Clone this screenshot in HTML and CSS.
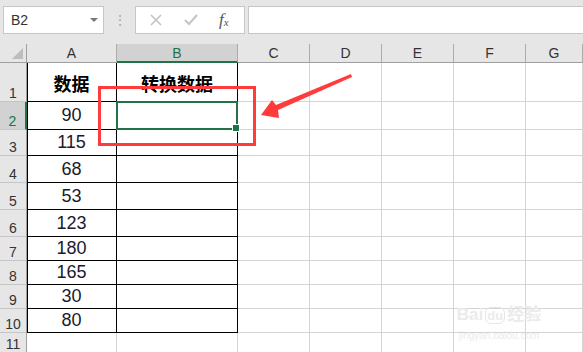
FILE: index.html
```html
<!DOCTYPE html>
<html lang="zh-CN">
<head>
    <meta charset="UTF-8">
    <title>转换数据</title>
    <link rel="stylesheet" href="styles.css">
</head>
<body>
    <div class="toolbar">
        <div class="namebox">
            <span>B2</span>
            <span class="caret"></span>
        </div>
        <div class="dots">⋮</div>
        <div class="fbuttons">
            <svg width="14" height="14" viewBox="0 0 14 14"><path d="M2 2 L12 12 M12 2 L2 12" stroke="#c4c4c4" stroke-width="1.6" fill="none"/></svg>
            <svg width="16" height="14" viewBox="0 0 16 14"><path d="M2 7 L6 11 L14 2" stroke="#c4c4c4" stroke-width="2" fill="none"/></svg>
            <span class="fx"><i>f</i><sub>x</sub></span>
        </div>
        <div class="finput"></div>
    </div>

    <div class="sheet">
        <div class="corner"><span class="tri"></span></div>
        <div class="ch">A</div>
        <div class="ch sel">B</div>
        <div class="ch">C</div>
        <div class="ch">D</div>
        <div class="ch">E</div>
        <div class="ch">F</div>
        <div class="ch">G</div>

        <div class="rh">1</div>
        <div class="c t a head">数据</div>
        <div class="c t b head">转换数据</div>
        <div class="c"></div><div class="c"></div><div class="c"></div><div class="c"></div><div class="c"></div>

        <div class="rh sel">2</div>
        <div class="c t a">90</div>
        <div class="c t b"></div>
        <div class="c"></div><div class="c"></div><div class="c"></div><div class="c"></div><div class="c"></div>

        <div class="rh">3</div>
        <div class="c t a">115</div>
        <div class="c t b"></div>
        <div class="c"></div><div class="c"></div><div class="c"></div><div class="c"></div><div class="c"></div>

        <div class="rh">4</div>
        <div class="c t a">68</div>
        <div class="c t b"></div>
        <div class="c"></div><div class="c"></div><div class="c"></div><div class="c"></div><div class="c"></div>

        <div class="rh">5</div>
        <div class="c t a">53</div>
        <div class="c t b"></div>
        <div class="c"></div><div class="c"></div><div class="c"></div><div class="c"></div><div class="c"></div>

        <div class="rh">6</div>
        <div class="c t a">123</div>
        <div class="c t b"></div>
        <div class="c"></div><div class="c"></div><div class="c"></div><div class="c"></div><div class="c"></div>

        <div class="rh">7</div>
        <div class="c t a">180</div>
        <div class="c t b"></div>
        <div class="c"></div><div class="c"></div><div class="c"></div><div class="c"></div><div class="c"></div>

        <div class="rh">8</div>
        <div class="c t a">165</div>
        <div class="c t b"></div>
        <div class="c"></div><div class="c"></div><div class="c"></div><div class="c"></div><div class="c"></div>

        <div class="rh">9</div>
        <div class="c t a">30</div>
        <div class="c t b"></div>
        <div class="c"></div><div class="c"></div><div class="c"></div><div class="c"></div><div class="c"></div>

        <div class="rh">10</div>
        <div class="c t a">80</div>
        <div class="c t b"></div>
        <div class="c"></div><div class="c"></div><div class="c"></div><div class="c"></div><div class="c"></div>

        <div class="rh">11</div>
        <div class="c"></div><div class="c"></div><div class="c"></div><div class="c"></div><div class="c"></div><div class="c"></div><div class="c"></div>

        <!-- overlays: active cell, annotation box and arrow, watermark -->
        <div class="active"><span class="handle"></span></div>
        <div class="redbox"></div>
        <svg class="arrow" width="100" height="50" viewBox="0 0 100 50">
            <polygon points="1,44 12,29 16,34 91,3 92,6 18,39 19,47" fill="#ff3b3b"/>
        </svg>
        <div class="watermark">
            <div class="wm-logo">Bai<span class="paw">du</span>经验</div>
            <div class="wm-url">jingyan.baidu.com</div>
        </div>
    </div>
</body>
</html>
```

FILE: styles.css
```css
body {
    margin: 0;
    font-family: "Liberation Sans", "Noto Sans CJK SC", sans-serif;
    background: #fff;
    overflow: hidden;
}

.toolbar {
    height: 44px;
    background: #e6e6e6;
    display: flex;
    align-items: flex-start;
    padding: 6px 0 0 3px;
    box-sizing: border-box;
}

.namebox {
    width: 101px;
    height: 28px;
    box-sizing: border-box;
    background: #fff;
    border: 1px solid #c6c6c6;
    display: flex;
    align-items: center;
    justify-content: space-between;
    padding: 0 5px 0 7px;
    font-size: 14px;
    color: #333;
}

.caret {
    width: 0;
    height: 0;
    border-left: 4px solid transparent;
    border-right: 4px solid transparent;
    border-top: 4px solid #777;
}

.dots {
    width: 31px;
    text-align: center;
    color: #aaa;
    font-size: 14px;
    line-height: 28px;
}

.fbuttons {
    width: 110px;
    height: 28px;
    box-sizing: border-box;
    background: #fff;
    border: 1px solid #c6c6c6;
    display: flex;
    align-items: center;
    padding: 0 0 0 13px;
    gap: 20px;
}

.fx {
    font-family: "Liberation Serif", serif;
    font-size: 17px;
    color: #555;
}

.fx sub {
    font-size: 11px;
    font-style: italic;
    vertical-align: -1px;
}

.finput {
    flex: 1;
    height: 28px;
    box-sizing: border-box;
    margin-left: 3px;
    background: #fff;
    border: 1px solid #c6c6c6;
    border-right: none;
}

.sheet {
    position: relative;
    display: grid;
    grid-template-columns: 27px 90px 121px 72px 72px 72px 72px 1fr;
    grid-template-rows: 19px 39px 28px 26px 27px 27px 27px 24px 24px 24px 24px 20px;
}

.sheet > div {
    box-sizing: border-box;
}

.corner {
    background: #e6e6e6;
    border-right: 1px solid #9f9f9f;
    border-bottom: 1px solid #9f9f9f;
    position: relative;
}

.tri {
    position: absolute;
    right: 3px;
    bottom: 3px;
    width: 0;
    height: 0;
    border-left: 11px solid transparent;
    border-bottom: 11px solid #bdbdbd;
}

.ch {
    background: #e6e6e6;
    border-right: 1px solid #ababab;
    border-bottom: 1px solid #9f9f9f;
    text-align: center;
    font-size: 14px;
    line-height: 19px;
    color: #333;
}

.ch.sel {
    background: #d2d2d2;
    color: #217346;
    border-bottom: 2px solid #217346;
}

.rh {
    background: #e6e6e6;
    border-right: 1px solid #9f9f9f;
    border-bottom: 1px solid #c6c6c6;
    font-size: 14px;
    color: #333;
    display: flex;
    align-items: flex-end;
    justify-content: center;
    padding-bottom: 1px;
    line-height: 14px;
}

.rh.sel {
    background: #d2d2d2;
    color: #217346;
    border-right: 2px solid #217346;
}

.c {
    border-right: 1px solid #d4d4d4;
    border-bottom: 1px solid #d4d4d4;
}

.c.t {
    border-right: 1px solid #000;
    border-bottom: 1px solid #000;
    display: flex;
    align-items: center;
    justify-content: center;
    font-size: 18px;
    color: #1a1a2e;
}

.c.a {
    box-shadow: inset 1px 0 0 #000;
}

.c.head {
    font-family: "Noto Sans CJK SC", sans-serif;
    font-weight: bold;
    color: #000;
    padding-top: 1px;
}

.active {
    position: absolute;
    left: 116px;
    top: 57px;
    width: 122px;
    height: 29px;
    border: 2px solid #217346;
    box-sizing: border-box;
}

.handle {
    position: absolute;
    right: -4px;
    bottom: -4px;
    width: 6px;
    height: 6px;
    background: #217346;
    border: 1px solid #fff;
}

.redbox {
    position: absolute;
    left: 98px;
    top: 42px;
    width: 158px;
    height: 60px;
    border: 3px solid #ff3b3b;
    box-sizing: border-box;
}

.arrow {
    position: absolute;
    left: 260px;
    top: 27px;
}

.watermark {
    position: absolute;
    left: 447px;
    top: 256px;
    color: #ebebeb;
    text-align: center;
    width: 104px;
}

.wm-logo {
    font-size: 17px;
    font-weight: bold;
    white-space: nowrap;
}

.paw {
    font-size: 13px;
    border: 1px solid #e6e6e6;
    border-radius: 6px;
    padding: 0 1px;
    margin: 0 2px;
}

.wm-url {
    font-size: 10px;
    margin-top: 5px;
}
```
